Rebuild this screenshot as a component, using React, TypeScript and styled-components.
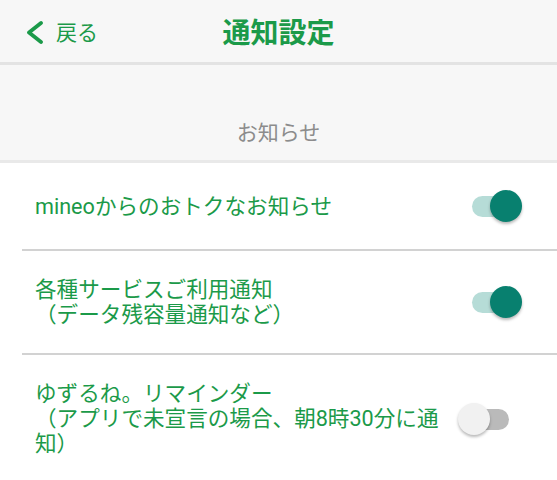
import React, { useState } from 'react';
import styled, { createGlobalStyle } from 'styled-components';

const GlobalStyle = createGlobalStyle`
  html, body {
    margin: 0;
    padding: 0;
    background: #ffffff;
  }
  body {
    font-family: Roboto, 'Noto Sans CJK JP', sans-serif;
  }
`;

const green = '#1b9a49';

const Page = styled.div`
  width: 557px;
  display: flex;
  flex-direction: column;
`;

const Header = styled.header`
  position: relative;
  height: 62px;
  background: #f7f7f7;
  border-bottom: 3px solid #e3e3e3;
  display: flex;
  align-items: center;
  justify-content: center;
`;

// back link sits over the header, left of the centred title
const BackButton = styled.button`
  position: absolute;
  left: 24px;
  top: 0;
  height: 62px;
  display: flex;
  align-items: center;
  gap: 12px;
  padding: 0;
  border: none;
  background: none;
  color: ${green};
  font-family: Roboto, 'Noto Sans CJK JP', sans-serif;
  font-size: 21px;
  cursor: pointer;
`;

const Title = styled.h1`
  margin: 0 0 1px 0;
  color: ${green};
  font-family: 'Noto Sans CJK JP', sans-serif;
  font-size: 28px;
  font-weight: 700;
  line-height: 32px;
`;

const SectionHeader = styled.div`
  height: 98px;
  box-sizing: border-box;
  background: #f7f7f7;
  border-bottom: 3px solid #e9e9e9;
  display: flex;
  align-items: flex-end;
  justify-content: center;
  padding-bottom: 15px;
  color: #8c8c8c;
  font-size: 21px;
  line-height: 24px;
`;

const List = styled.div`
  display: flex;
  flex-direction: column;
`;

const Row = styled.div<{ $last?: boolean }>`
  margin-left: 22px;
  padding: 26px 35px 26px 13px;
  min-height: 88px;
  box-sizing: border-box;
  display: flex;
  align-items: center;
  gap: 6px;
  border-bottom: ${(p) => (p.$last ? 'none' : '2px solid #d2d2d2')};
`;

const Label = styled.div`
  flex: 1;
  color: ${green};
  font-size: 21.6px;
  line-height: 25px;
`;

const SwitchBox = styled.button`
  position: relative;
  flex: none;
  width: 64px;
  height: 32px;
  padding: 0;
  border: none;
  background: none;
  cursor: pointer;
`;

const Track = styled.span<{ $on: boolean }>`
  position: absolute;
  left: 14px;
  top: 6px;
  width: 37px;
  height: 21px;
  border-radius: 11px;
  background: ${(p) => (p.$on ? '#b6dcd7' : '#bababa')};
`;

const Thumb = styled.span<{ $on: boolean }>`
  position: absolute;
  top: 0;
  left: ${(p) => (p.$on ? '32px' : '0')};
  width: 32px;
  height: 32px;
  border-radius: 50%;
  background: ${(p) => (p.$on ? '#08806f' : '#f1f1f1')};
  box-shadow: 0 2px 3px rgba(0, 0, 0, 0.28);
`;

const Switch = ({ initial }: { initial: boolean }) => {
  const [on, setOn] = useState(initial);
  return (
    <SwitchBox onClick={() => setOn(!on)} aria-pressed={on}>
      <Track $on={on} />
      <Thumb $on={on} />
    </SwitchBox>
  );
};

const items = [
  { text: ['mineoからのおトクなお知らせ'], on: true },
  { text: ['各種サービスご利用通知', '（データ残容量通知など）'], on: true },
  {
    text: ['ゆずるね。リマインダー', '（アプリで未宣言の場合、朝8時30分に通知）'],
    on: false,
  },
];

export default function App() {
  return (
    <Page>
      <GlobalStyle />
      <Header>
        <BackButton>
          <svg width="20" height="26" viewBox="0 0 20 26">
            <path
              d="M17 5 L5 14.5 L17 24"
              fill="none"
              stroke={green}
              strokeWidth="3.8"
              strokeLinecap="round"
              strokeLinejoin="round"
            />
          </svg>
          戻る
        </BackButton>
        <Title>通知設定</Title>
      </Header>
      <SectionHeader>お知らせ</SectionHeader>
      <List>
        {items.map((item, i) => (
          <Row key={i} $last={i === items.length - 1}>
            <Label>
              {item.text.map((line, j) => (
                <div key={j}>{line}</div>
              ))}
            </Label>
            <Switch initial={item.on} />
          </Row>
        ))}
      </List>
    </Page>
  );
}
